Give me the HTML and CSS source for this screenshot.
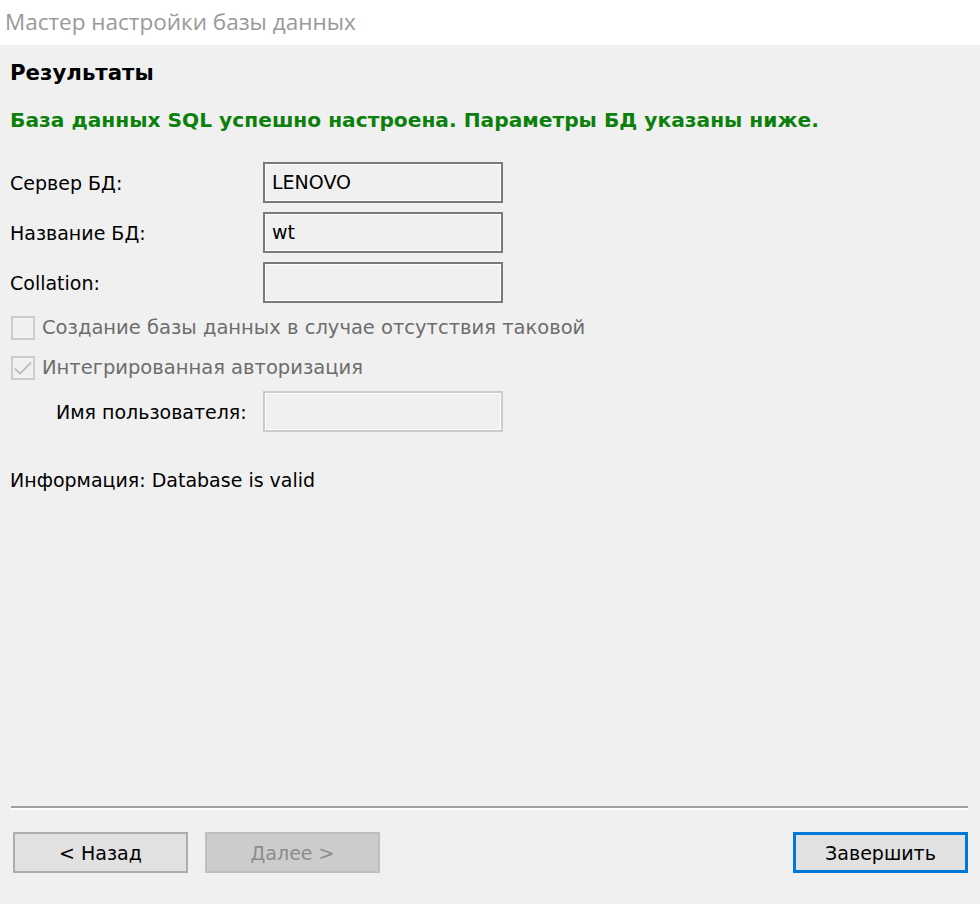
FILE: index.html
```html
<!DOCTYPE html>
<html lang="ru">
<head>
<meta charset="utf-8">
<title>Мастер настройки базы данных</title>
<link rel="stylesheet" href="styles.css">
</head>
<body>
<div class="window">
  <header class="titlebar">Мастер настройки базы данных</header>
  <main class="content">
    <h1 class="heading">Результаты</h1>
    <p class="success">База данных SQL успешно настроена. Параметры БД указаны ниже.</p>
    <div class="form">
      <div class="row">
        <span class="label">Сервер БД:</span>
        <div class="field">LENOVO</div>
      </div>
      <div class="row">
        <span class="label">Название БД:</span>
        <div class="field">wt</div>
      </div>
      <div class="row">
        <span class="label">Collation:</span>
        <div class="field"></div>
      </div>
      <div class="check first">
        <span class="box"></span>
        <span class="check-text">Создание базы данных в случае отсутствия таковой</span>
      </div>
      <div class="check">
        <span class="box">
          <svg viewBox="0 0 24 24" width="24" height="24"><path d="M4 12.5 L9 17.5 L20 6.5" fill="none" stroke="#b4b4b4" stroke-width="1.6"/></svg>
        </span>
        <span class="check-text">Интегрированная авторизация</span>
      </div>
      <div class="row sub">
        <span class="label">Имя пользователя:</span>
        <div class="field disabled"></div>
      </div>
    </div>
    <p class="info">Информация: Database is valid</p>
    <div class="spacer"></div>
    <div class="separator"></div>
    <div class="buttons">
      <button class="btn">&lt; Назад</button>
      <button class="btn btn-disabled">Далее &gt;</button>
      <div class="grow"></div>
      <button class="btn btn-default">Завершить</button>
    </div>
  </main>
</div>
</body>
</html>
```

FILE: styles.css
```css
html, body {
  margin: 0;
  padding: 0;
  height: 100%;
}
body {
  background: #f0f0f0;
  font-family: "DejaVu Sans", Tahoma, sans-serif;
  font-size: 19px;
  color: #000;
}
.window {
  display: flex;
  flex-direction: column;
  height: 904px;
}
.titlebar {
  height: 45px;
  background: #fff;
  color: #999999;
  font-family: "Open Sans", "Noto Sans", sans-serif;
  font-size: 22.5px;
  line-height: 43px;
  padding-left: 5px;
  box-sizing: border-box;
}
.content {
  flex: 1;
  display: flex;
  flex-direction: column;
  padding: 0 12px 0 10px;
}
.heading {
  margin: 16px 0 0 0;
  font-size: 21.3px;
  font-weight: bold;
  line-height: 24px;
}
.success {
  margin: 23px 0 0 0;
  font-size: 20.2px;
  font-weight: bold;
  color: #0b800b;
  line-height: 24px;
}
.form {
  margin-top: 30px;
  display: flex;
  flex-direction: column;
}
.row {
  display: flex;
  align-items: center;
  height: 41px;
  margin-bottom: 9px;
}
.row:nth-child(3) {
  margin-bottom: 0;
}
.label {
  width: 253px;
  line-height: 24px;
}
.field {
  width: 240px;
  height: 41px;
  box-sizing: border-box;
  border: 2px solid #7a7a7a;
  box-shadow: inset 0 0 0 1px #ffffff;
  padding: 0 7px;
  line-height: 37px;
  background: #f0f0f0;
}
.field.disabled {
  border-color: #cccccc;
}
.check {
  display: flex;
  align-items: center;
  height: 24px;
  margin: 16px 0 0 1px;
  color: #6d6d6d;
}
.check.first {
  margin-top: 13px;
}
.box {
  width: 24px;
  height: 24px;
  box-sizing: border-box;
  border: 2px solid #cccccc;
  background: #f0f0f0;
  margin-right: 7px;
  display: flex;
  flex-shrink: 0;
}
.box svg {
  margin: -2px;
}
.check-text {
  font-size: 19.5px;
  line-height: 24px;
}
.row.sub {
  margin-top: 11px;
  margin-bottom: 0;
}
.row.sub .label {
  width: 207px;
  padding-left: 46px;
}
.info {
  margin: 36px 0 0 0;
  line-height: 24px;
}
.spacer {
  flex: 1;
}
.separator {
  height: 2px;
  background: #a0a0a0;
  border-bottom: 2px solid #ffffff;
  margin: 0 0 0 1px;
}
.buttons {
  display: flex;
  margin-top: 22px;
  margin-bottom: 31px;
  padding-left: 3px;
}
.btn {
  width: 175px;
  height: 41px;
  box-sizing: border-box;
  border: 2px solid #adadad;
  background: #e1e1e1;
  font-family: "DejaVu Sans", Tahoma, sans-serif;
  font-size: 19px;
  color: #000;
  padding: 0;
  margin-right: 17px;
}
.btn-disabled {
  background: #cccccc;
  border-color: #bfbfbf;
  color: #8c8c8c;
}
.grow {
  flex: 1;
}
.btn-default {
  border: 3px solid #0078d7;
  margin-right: 0;
}
```
